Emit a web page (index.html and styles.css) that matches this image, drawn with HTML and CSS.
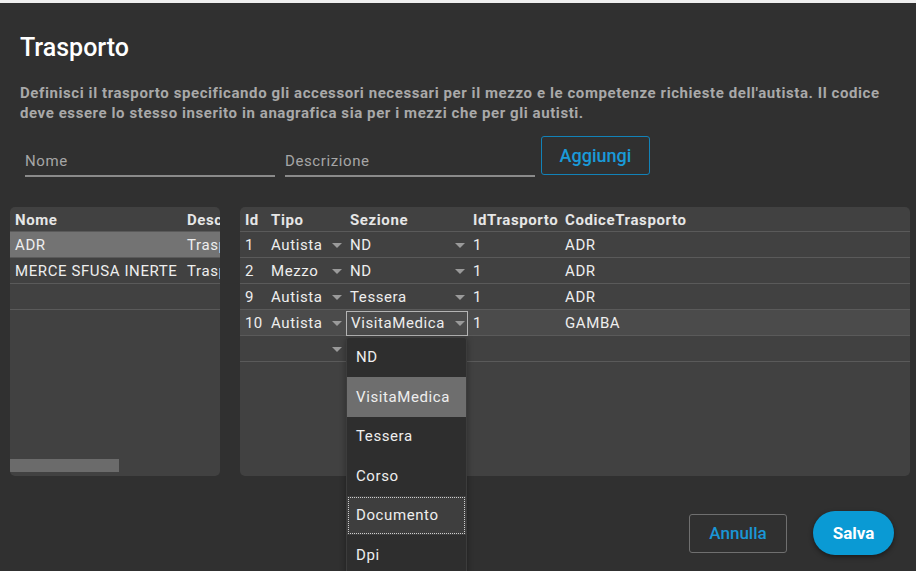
FILE: index.html
```html
<!DOCTYPE html>
<html lang="it">
<head>
<meta charset="utf-8">
<title>Trasporto</title>
<link rel="stylesheet" href="styles.css">
</head>
<body>
<div class="topstrip"></div>
<main class="dialog">
  <h1 class="title">Trasporto</h1>
  <p class="desc">Definisci il trasporto specificando gli accessori necessari per il mezzo e le competenze richieste dell'autista. Il codice deve essere lo stesso inserito in anagrafica sia per i mezzi che per gli autisti.</p>
  <div class="form-row">
    <label class="field"><span class="placeholder">Nome</span></label>
    <label class="field"><span class="placeholder">Descrizione</span></label>
    <button class="btn-outline">Aggiungi</button>
  </div>
  <div class="panels">
    <section class="panel panel-left">
      <div class="grid grid-left">
        <div class="row head">
          <div class="cell c-nome">Nome</div>
          <div class="cell c-desc">Descr</div>
        </div>
        <div class="row selected">
          <div class="cell c-nome">ADR</div>
          <div class="cell c-desc">Traspo</div>
        </div>
        <div class="row">
          <div class="cell c-nome">MERCE SFUSA INERTE</div>
          <div class="cell c-desc">Traspo</div>
        </div>
        <div class="row">
          <div class="cell c-nome"></div>
          <div class="cell c-desc"></div>
        </div>
      </div>
      <div class="hscroll"></div>
    </section>
    <section class="panel panel-right">
      <div class="grid">
        <div class="row head">
          <div class="cell c-id">Id</div>
          <div class="cell c-tipo">Tipo</div>
          <div class="cell c-sez">Sezione</div>
          <div class="cell c-idt">IdTrasporto</div>
          <div class="cell c-cod">CodiceTrasporto</div>
        </div>
        <div class="row">
          <div class="cell c-id">1</div>
          <div class="cell c-tipo combo">Autista<span class="caret"></span></div>
          <div class="cell c-sez combo">ND<span class="caret"></span></div>
          <div class="cell c-idt">1</div>
          <div class="cell c-cod">ADR</div>
        </div>
        <div class="row">
          <div class="cell c-id">2</div>
          <div class="cell c-tipo combo">Mezzo<span class="caret"></span></div>
          <div class="cell c-sez combo">ND<span class="caret"></span></div>
          <div class="cell c-idt">1</div>
          <div class="cell c-cod">ADR</div>
        </div>
        <div class="row">
          <div class="cell c-id">9</div>
          <div class="cell c-tipo combo">Autista<span class="caret"></span></div>
          <div class="cell c-sez combo">Tessera<span class="caret"></span></div>
          <div class="cell c-idt">1</div>
          <div class="cell c-cod">ADR</div>
        </div>
        <div class="row current">
          <div class="cell c-id">10</div>
          <div class="cell c-tipo combo">Autista<span class="caret"></span></div>
          <div class="cell c-sez combo editing">VisitaMedica<span class="caret"></span>
            <ul class="dropdown">
              <li class="opt">ND</li>
              <li class="opt hover">VisitaMedica</li>
              <li class="opt">Tessera</li>
              <li class="opt">Corso</li>
              <li class="opt focus">Documento</li>
              <li class="opt">Dpi</li>
            </ul>
          </div>
          <div class="cell c-idt">1</div>
          <div class="cell c-cod">GAMBA</div>
        </div>
        <div class="row">
          <div class="cell c-id"></div>
          <div class="cell c-tipo combo"><span class="caret"></span></div>
          <div class="cell c-sez combo"></div>
          <div class="cell c-idt"></div>
          <div class="cell c-cod"></div>
        </div>
      </div>
    </section>
  </div>
  <div class="actions">
    <button class="btn-cancel">Annulla</button>
    <button class="btn-save">Salva</button>
  </div>
</main>
</body>
</html>
```

FILE: styles.css
```css
* { box-sizing: border-box; }
html, body {
  margin: 0;
  height: 100%;
  overflow: hidden;
}
body {
  background: #303030;
  font-family: Roboto, "Noto Sans", "Liberation Sans", sans-serif;
  color: #eeeeee;
}
.topstrip {
  height: 3px;
  background: #efefef;
}
.dialog {
  display: flex;
  flex-direction: column;
}
.title {
  margin: 30px 0 0 20px;
  font-size: 25px;
  line-height: 30px;
  font-weight: 500;
  color: #ffffff;
}
.desc {
  margin: 20px 20px 0 20px;
  font-size: 15px;
  line-height: 20px;
  font-weight: 700;
  letter-spacing: 0.58px;
  color: #a9a9a9;
}
.form-row {
  display: flex;
  align-items: flex-end;
  gap: 10px;
  margin: 12px 0 0 25px;
}
.field {
  width: 250px;
  height: 42px;
  display: flex;
  align-items: flex-end;
  padding-bottom: 5px;
  border-bottom: 2px solid #8a8a8a;
}
.placeholder {
  font-size: 15px;
  letter-spacing: 0.6px;
  color: #a6a6a6;
}
.btn-outline {
  width: 109px;
  height: 39px;
  margin: 0 0 2px -4px;
  background: transparent;
  border: 1px solid #1282b8;
  border-radius: 3px;
  color: #1a9ad8;
  font-family: inherit;
  font-size: 18px;
  font-weight: 500;
  padding: 0;
}
.panels {
  display: flex;
  gap: 20px;
  margin: 30px 0 0 10px;
}
.panel {
  background: #414141;
  border-radius: 5px;
  height: 269px;
  position: relative;
}
.panel-left {
  width: 210px;
  overflow: hidden;
}
.panel-right {
  width: 670px;
}
.grid {
  display: flex;
  flex-direction: column;
}
.row {
  display: flex;
  height: 26px;
  padding-top: 1px;
  border-bottom: 1px solid #5a5a5a;
  font-size: 15px;
  letter-spacing: 0.6px;
  align-items: center;
}
.row.head {
  height: 25px;
  font-weight: 700;
  color: #e6e6e6;
}
.row.selected { background: #737373; }
.row.current { background: #4b4b4b; }
.cell {
  padding-left: 5px;
  white-space: nowrap;
  height: 100%;
  display: flex;
  align-items: center;
  flex: none;
  position: relative;
}
.c-nome { width: 172px; }
.c-desc {
  width: 38px;
  overflow: hidden;
}
.c-id { width: 26px; letter-spacing: 0.3px; }
.c-tipo { width: 79px; }
.c-sez { width: 123px; }
.c-idt { width: 92px; }
.c-cod { flex: 1; }
.caret {
  position: absolute;
  right: 3px;
  top: 50%;
  margin-top: -2px;
  width: 0;
  height: 0;
  border-left: 5px solid transparent;
  border-right: 5px solid transparent;
  border-top: 5px solid #9a9a9a;
}
.editing {
  margin-left: 1px;
  width: 122px;
  height: 25px;
  border: 1px solid #b4b4b4;
  padding-left: 4px;
}
.editing .caret { right: 2px; }
.dropdown {
  position: absolute;
  left: -1px;
  top: 25px;
  width: 121px;
  margin: 0;
  padding: 0;
  list-style: none;
  background: #2e2e2e;
  border: 1px solid #3c3c3c;
  border-radius: 3px 3px 0 0;
  z-index: 5;
  box-shadow: 0 2px 6px rgba(0,0,0,0.35);
}
.opt {
  height: 39.5px;
  display: flex;
  align-items: center;
  padding-left: 9px;
  font-size: 15px;
  color: #eeeeee;
}
.opt.hover { background: #6e6e6e; }
.opt.focus {
  background: #3e3e3e;
  outline: 1px dotted #cfcfcf;
  outline-offset: -2px;
}
.hscroll {
  position: absolute;
  left: 0;
  bottom: 4px;
  width: 109px;
  height: 13px;
  background: #6b6b6b;
}
.actions {
  display: flex;
  justify-content: flex-end;
  align-items: center;
  gap: 26px;
  margin: 35px 22px 0 0;
}
.btn-cancel {
  width: 98px;
  height: 39px;
  background: transparent;
  border: 1px solid #6f6f6f;
  border-radius: 3px;
  color: #1a96d6;
  font-family: inherit;
  font-size: 17px;
  font-weight: 500;
  padding: 0;
}
.btn-save {
  width: 81px;
  height: 44px;
  background: #0a9ad4;
  border: none;
  border-radius: 22px;
  color: #ffffff;
  font-family: inherit;
  font-size: 17px;
  font-weight: 700;
  padding: 0;
  box-shadow: 0 2px 5px rgba(0,0,0,0.45);
}
```
